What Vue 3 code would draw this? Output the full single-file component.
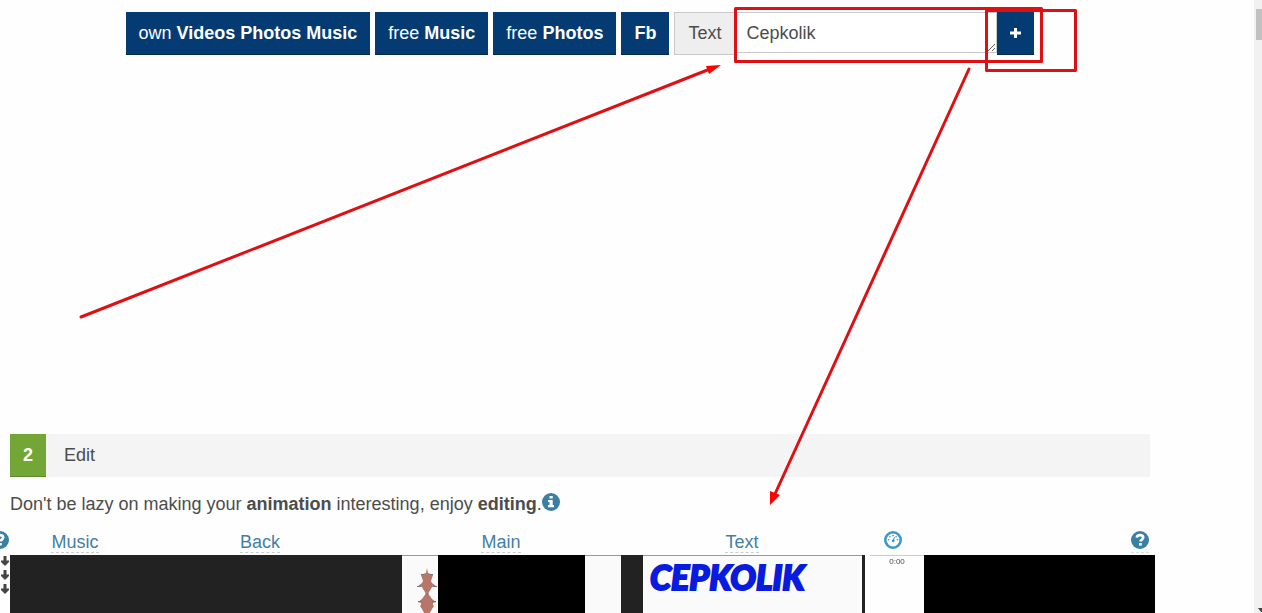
<script setup>
import { ref } from 'vue'

const sources = [
  { plain: 'own ', strong: 'Videos Photos Music' },
  { plain: 'free ', strong: 'Music' },
  { plain: 'free ', strong: 'Photos' },
  { plain: '', strong: 'Fb' },
]
const tracks = ['Music', 'Back', 'Main', 'Text']
const caption = ref('Cepkolik')
</script>

<template>
  <div class="shell">
    <main class="page">
      <form class="toolbar" @submit.prevent>
        <button v-for="s in sources" :key="s.plain + s.strong" type="button" class="btn source">{{ s.plain }}<b>{{ s.strong }}</b></button>
        <label class="addon" for="caption">Text</label>
        <textarea id="caption" v-model="caption" class="caption" rows="1"></textarea>
        <button type="submit" class="btn add" aria-label="Add text">
          <svg width="11" height="10" viewBox="0 0 11 10"><path d="M4 0h3v3.500h4v3H7V10H4V6.500H0v-3h4z" fill="#fff" /></svg>
        </button>
      </form>

      <h2 class="step"><span class="number">2</span><span class="title">Edit</span></h2>

      <p class="hint">
        <span>Don't be lazy on making your <b>animation</b> interesting, enjoy <b>editing</b>.</span>
        <a href="#" class="icon" aria-label="Information">
          <svg width="18" height="18" viewBox="0 0 18 18"><circle cx="9" cy="9" r="9" fill="#3a80a5" /><path d="M7.5 3h3.2v2.6H7.5zM6 7h4.7v5H12v2.2H6V12h1.5V9H6z" fill="#fff" /></svg>
        </a>
      </p>

      <nav class="labels">
        <a href="#" class="icon help-left" aria-label="Help">
          <svg width="18" height="18" viewBox="0 0 18 18"><circle cx="9" cy="9" r="9" fill="#3a80a5" /><path d="M5.8 6.7C6 4.7 7.2 4.1 9 4.1c2 0 3.2 1 3.2 2.5 0 2-2.7 2-2.7 4" fill="none" stroke="#fff" stroke-width="2.6" /><path d="M8 12h2.800v2.600H8z" fill="#fff" /></svg>
        </a>
        <a v-for="t in tracks" :key="t" href="#" class="track">{{ t }}</a>
        <a href="#" class="icon gauge" aria-label="Speed">
          <svg width="18" height="18" viewBox="0 0 18 18"><circle cx="9" cy="9" r="7.7" fill="#fff" stroke="#3b98cf" stroke-width="2.6" /><g fill="#3b86b4"><circle cx="4.500" cy="8.700" r=".8" /><circle cx="5.900" cy="5.800" r=".8" /><circle cx="9" cy="4.600" r=".8" /><circle cx="12.100" cy="5.800" r=".8" /><circle cx="13.500" cy="8.700" r=".8" /><path d="M10 6l.8.3-.7 2.500a1.300 1.300 0 1 1-1-.3z" /></g></svg>
        </a>
        <a href="#" class="icon help" aria-label="Help">
          <svg width="18" height="18" viewBox="0 0 18 18"><circle cx="9" cy="9" r="9" fill="#3a80a5" /><path d="M5.8 6.7C6 4.7 7.2 4.1 9 4.1c2 0 3.2 1 3.2 2.5 0 2-2.7 2-2.7 4" fill="none" stroke="#fff" stroke-width="2.6" /><path d="M8 12h2.800v2.600H8z" fill="#fff" /></svg>
        </a>
      </nav>

      <section class="timeline">
        <div class="arrows">
          <svg v-for="n in 3" :key="n" width="8" height="10" viewBox="0 0 8 10"><path d="M2.500 0h3v4.500H8v1.500L4 10 0 6V4.500h2.500z" fill="#444" /></svg>
        </div>
        <div class="dark"></div>
        <div class="light wave">
          <svg width="20" height="46" viewBox="0 0 20 46"><path d="M10 0l1 5 3 1 2 1-1 3-1 3 1 2 4 3-4 1-1 2-2 3-1 2 2 2 2 3 4 3-3 1v2l1 1-2 3-1 2-2 3H8l-2-3-1-2-2-3 1-1v-2l-3-1 4-3 2-3 2-2-1-2-2-3-1-2-4-1 4-3 1-2-1-3-1-3 2-1 3-1z" fill="#b77768" /><path d="M4 6.500h3M13 6.500h3M0 18.500h4M16 18.500h4M8 26h4M1 33.500h4M15 33.500h4" stroke="#777" stroke-width="1" /></svg>
        </div>
        <div class="video"></div>
        <div class="light"></div>
        <div class="dark"></div>
        <div class="light words">CEPKOLIK</div>
        <div class="dark"></div>
        <div></div>
        <div class="time">0:00</div>
        <div class="video"></div>
      </section>
    </main>

    <div class="scrollbar">
      <div class="thumb"></div>
      <svg width="4" height="5" viewBox="0 0 4 5"><path d="M0 0h4v4H3z" fill="#444" /></svg>
    </div>

    <svg class="notes" width="1100" height="520" viewBox="0 0 1100 520" fill="none" stroke="#df1014" stroke-width="3" stroke-linejoin="round" stroke-linecap="round">
      <rect x="735.500" y="8.500" width="306" height="53" />
      <rect x="986.500" y="10.500" width="89" height="60" />
      <path d="M81 317L710 69M969 69L775 494" />
      <path d="M721 65L706 66L709 74zM770 505L770 491L780 495z" fill="#f00" stroke="none" />
    </svg>
  </div>
</template>

<style>
body {
  margin: 0;
  background: #fefefe;
}
</style>

<style scoped>
.shell {
  position: relative;
  display: flex;
  height: 100vh;
  overflow: hidden;
  font: 18px/24px "Liberation Sans", Arial, sans-serif;
  color: #4c4c4c;
}
.page {
  flex: 1;
  min-width: 0;
  display: flex;
  flex-direction: column;
  box-sizing: border-box;
  padding: 12px 104px 0 10px;
}
.toolbar {
  display: flex;
  justify-content: center;
  align-items: flex-start;
  margin-bottom: 379px;
}
.btn {
  height: 43px;
  padding: 0 13px;
  border: 0;
  border-bottom: 1px solid #03284d;
  background: #043b72;
  color: #fff;
  font: inherit;
  white-space: pre;
}
.source {
  margin-right: 5px;
}
.addon {
  box-sizing: border-box;
  height: 43px;
  padding: 8px 14px 8px 13px;
  border: 1px solid #c8c8c8;
  border-right: 0;
  background: #eee;
}
.caption {
  box-sizing: border-box;
  width: 262px;
  height: 41px;
  margin: 0;
  padding: 8px 10px;
  border: 1px solid #c8c8c8;
  border-radius: 0;
  background: #fff;
  color: inherit;
  font: inherit;
  outline: 0;
}
.btn.add {
  width: 37px;
}
.add svg {
  display: block;
}
.step {
  display: flex;
  margin: 0;
  background: #f4f4f4;
  font-size: 18px;
  font-weight: 400;
  line-height: 42px;
}
.number {
  width: 36px;
  border-bottom: 1px solid #5c8a2c;
  background: #72a738;
  color: #fff;
  font-weight: 700;
  text-align: center;
}
.title {
  margin-left: 18px;
}
.hint {
  display: flex;
  margin: 15px 0 13px;
}
.icon svg {
  display: block;
}
.hint .icon {
  margin-top: 1px;
}
.labels {
  display: grid;
  grid-template-columns: 10px 130fr 240fr 242fr 240fr 62fr 231fr;
  align-items: start;
  margin: 0 -5px 0 -10px;
  height: 26px;
}
.labels a {
  justify-self: center;
  color: #447fa3;
  text-decoration: none;
}
.labels .track {
  height: 23px;
  line-height: 26px;
  border-bottom: 1px dashed #ccc;
}
.labels .icon {
  margin-top: 2px;
}
.labels .help-left {
  justify-self: end;
  margin-right: 1px;
}
.labels .help {
  justify-self: end;
  margin-right: 6px;
  height: 21px;
  border-bottom: 1px dashed #ddd;
}
.timeline {
  flex: 1;
  min-height: 0;
  display: grid;
  grid-template-columns: 10px 392fr 36px 147fr 36px 22px 219fr 3px 5px 54px 231fr;
  grid-template-rows: 100%;
  margin: 0 -5px 0 -10px;
}
.arrows {
  display: flex;
  flex-direction: column;
  align-items: center;
  gap: 4px;
  padding-top: 1px;
}
.dark {
  background: #222;
}
.video {
  background: #000;
}
.light {
  box-sizing: border-box;
  border-top: 1px solid #999;
  background: #fafafa;
}
.wave {
  padding: 12px 0 0 15px;
  overflow: hidden;
}
.words {
  padding: 1px 0 0 7px;
  color: #0a1be0;
  font: italic 900 34px/40px Lato, sans-serif;
  -webkit-text-stroke: 2px #0a1be0;
  stroke-linejoin: round;
  overflow: hidden;
}
.time {
  border-top: 1px solid #ccc;
  font: 8px/12px "Liberation Sans", Arial, sans-serif;
  text-align: center;
}
.scrollbar {
  width: 8px;
  display: flex;
  flex-direction: column;
  justify-content: space-between;
  align-items: flex-end;
  box-sizing: border-box;
  padding-top: 9px;
  background: #f1f1f1;
}
.thumb {
  width: 6px;
  height: 31px;
  background: #c1c1c1;
}
.notes {
  position: absolute;
  top: 0;
  left: 0;
  pointer-events: none;
}
</style>
